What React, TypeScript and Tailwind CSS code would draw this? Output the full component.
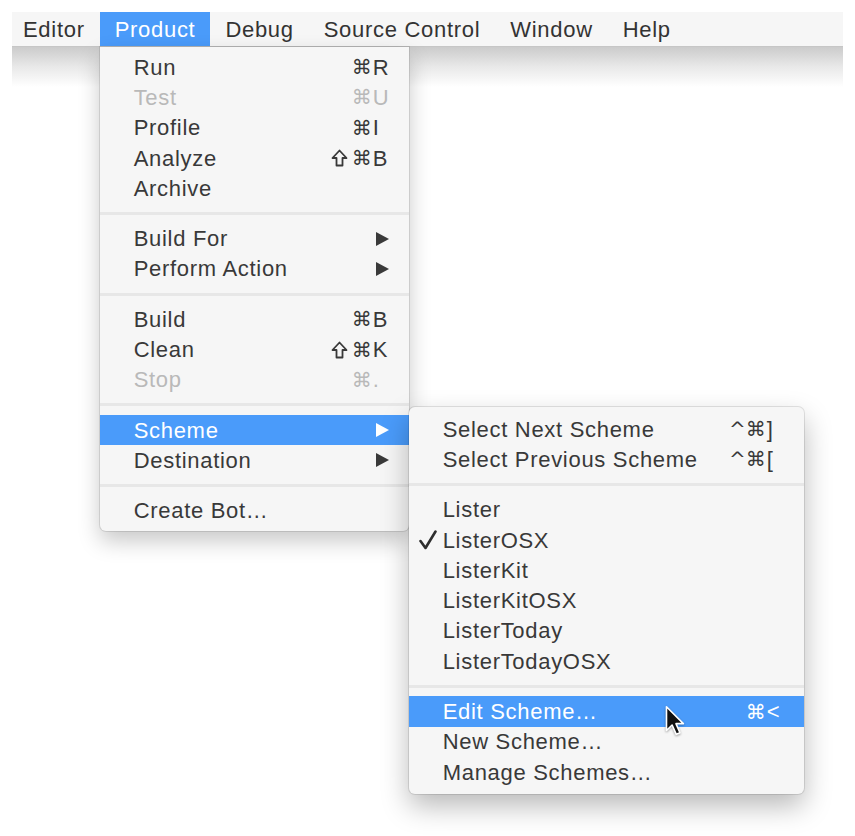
import React from "react";

type Item = {
  label: string;
  mods?: string;
  keyChar?: string;
  disabled?: boolean;
  submenu?: boolean;
  active?: boolean;
  checked?: boolean;
  cursor?: boolean;
};

const productGroups: Item[][] = [
  [
    { label: "Run", mods: "⌘", keyChar: "R" },
    { label: "Test", mods: "⌘", keyChar: "U", disabled: true },
    { label: "Profile", mods: "⌘", keyChar: "I" },
    { label: "Analyze", mods: "⇧⌘", keyChar: "B" },
    { label: "Archive" },
  ],
  [
    { label: "Build For", submenu: true },
    { label: "Perform Action", submenu: true },
  ],
  [
    { label: "Build", mods: "⌘", keyChar: "B" },
    { label: "Clean", mods: "⇧⌘", keyChar: "K" },
    { label: "Stop", mods: "⌘", keyChar: ".", disabled: true },
  ],
  [
    { label: "Scheme", submenu: true, active: true },
    { label: "Destination", submenu: true },
  ],
  [{ label: "Create Bot…" }],
];

const schemeGroups: Item[][] = [
  [
    { label: "Select Next Scheme", mods: "^⌘", keyChar: "]" },
    { label: "Select Previous Scheme", mods: "^⌘", keyChar: "[" },
  ],
  [
    { label: "Lister" },
    { label: "ListerOSX", checked: true },
    { label: "ListerKit" },
    { label: "ListerKitOSX" },
    { label: "ListerToday" },
    { label: "ListerTodayOSX" },
  ],
  [
    { label: "Edit Scheme…", mods: "⌘", keyChar: "<", active: true, cursor: true },
    { label: "New Scheme…" },
    { label: "Manage Schemes…" },
  ],
];

const menuBar = ["Editor", "Product", "Debug", "Source Control", "Window", "Help"];

function Separator() {
  return (
    <div className="py-[8.5px]">
      <div className="h-[3px] bg-[#e7e7e7]" />
    </div>
  );
}

function Arrow({ white }: { white?: boolean }) {
  return (
    <svg width="13" height="14" viewBox="0 0 13 14">
      <polygon points="0,0 13,7 0,14" fill={white ? "#ffffff" : "#3a3a3a"} />
    </svg>
  );
}

function Check() {
  return (
    <svg width="18" height="20" viewBox="0 0 18 20">
      <path
        d="M1.5 11 L6.5 18 L16.5 1.5"
        fill="none"
        stroke="#2e2e2e"
        strokeWidth="2.6"
        strokeLinecap="round"
        strokeLinejoin="round"
      />
    </svg>
  );
}

// shift key glyph, drawn so it doesn't fall back to an emoji font
function ShiftKey({ color }: { color: string }) {
  return (
    <svg width="17" height="18" viewBox="0 0 17 18" className="mr-[4px]">
      <path
        d="M8.5 1.5 L15.5 9 L11.5 9 L11.5 16.5 L5.5 16.5 L5.5 9 L1.5 9 Z"
        fill="none"
        stroke={color}
        strokeWidth="1.8"
        strokeLinejoin="round"
      />
    </svg>
  );
}

function Cursor() {
  return (
    <svg width="20" height="31" viewBox="0 0 13.5 20.5" className="drop-shadow-[0_1px_1px_rgba(0,0,0,0.35)]">
      <path
        d="M1 1 L1 17 L4.8 13.3 L7.6 19.6 L10.1 18.5 L7.4 12.4 L12.4 12.4 Z"
        fill="#111"
        stroke="#fff"
        strokeWidth="1.1"
        strokeLinejoin="round"
      />
    </svg>
  );
}

function Row({
  item,
  keyPad,
  children,
}: {
  item: Item;
  keyPad: string;
  children?: React.ReactNode;
}) {
  const color = item.active
    ? "text-white"
    : item.disabled
      ? "text-[#b9b9b9]"
      : "text-[#393939]";
  const glyph = item.active ? "#ffffff" : item.disabled ? "#b9b9b9" : "#393939";
  const mods = item.mods ?? "";
  return (
    <div
      className={`relative flex h-[30.3px] items-center ${color} ${
        item.active ? "bg-[#4a9bfa]" : ""
      }`}
    >
      <div className="flex w-[34px] shrink-0 items-center pl-[10px]">
        {item.checked && <Check />}
      </div>
      <span className="flex-1 whitespace-nowrap">{item.label}</span>
      {item.submenu && (
        <div className="pr-[20px]">
          <Arrow white={item.active} />
        </div>
      )}
      {item.keyChar && (
        <div className={`flex items-center ${keyPad}`}>
          {mods.includes("⇧") && <ShiftKey color={glyph} />}
          <span className="whitespace-nowrap font-['DejaVu_Sans',sans-serif] text-[20px] tracking-normal">
            {mods.replace("⇧", "")}
          </span>
          <span className="w-[20px] pl-[1px] tracking-normal">{item.keyChar}</span>
        </div>
      )}
      {item.cursor && (
        <div className="absolute left-[256px] top-[9px]">
          <Cursor />
        </div>
      )}
      {children}
    </div>
  );
}

function SchemeMenu() {
  return (
    <div className="absolute left-full top-[-8px] z-20 w-[395px] rounded-[6px] bg-[#f6f6f6] pt-[7px] pb-[7px] shadow-[0_0_0_1px_rgba(0,0,0,0.1),0_12px_28px_rgba(0,0,0,0.28)]">
      {schemeGroups.map((group, gi) => (
        <div key={gi}>
          {gi > 0 && <Separator />}
          {group.map((item) => (
            <Row key={item.label} item={item} keyPad="pr-[18px]" />
          ))}
        </div>
      ))}
    </div>
  );
}

function ProductMenu() {
  return (
    <div className="absolute left-0 top-[35px] z-10 w-[309px] rounded-b-[6px] bg-[#f6f6f6] pt-[5px] pb-[5px] shadow-[0_0_0_1px_rgba(0,0,0,0.1),0_10px_22px_rgba(0,0,0,0.22)]">
      {productGroups.map((group, gi) => (
        <div key={gi}>
          {gi > 0 && <Separator />}
          {group.map((item) => (
            <Row key={item.label} item={item} keyPad="pr-[17px]">
              {item.label === "Scheme" && <SchemeMenu />}
            </Row>
          ))}
        </div>
      ))}
    </div>
  );
}

export default function App() {
  return (
    <div className="h-[836px] w-[855px] overflow-hidden bg-white px-[12px] pt-[12px] font-['Liberation_Sans','DejaVu_Sans',sans-serif] text-[22px] tracking-[0.7px]">
      <div className="flex h-[35px] w-[831px] border-b border-[#c6c6c6] bg-[#f6f6f6] text-[#333333]">
        {menuBar.map((name, i) => {
          const active = name === "Product";
          return (
            <div
              key={name}
              className={`relative flex h-[34px] items-center ${
                i === 0 ? "pl-[11px] pr-[15px]" : "px-[15px]"
              } ${active ? "bg-[#4a9bfa] text-white" : ""}`}
            >
              {name}
              {active && <ProductMenu />}
            </div>
          );
        })}
      </div>
      <div className="h-[40px] w-[831px] bg-linear-to-b from-[#cbcbcb] via-[#e9e9e9] to-white" />
    </div>
  );
}
